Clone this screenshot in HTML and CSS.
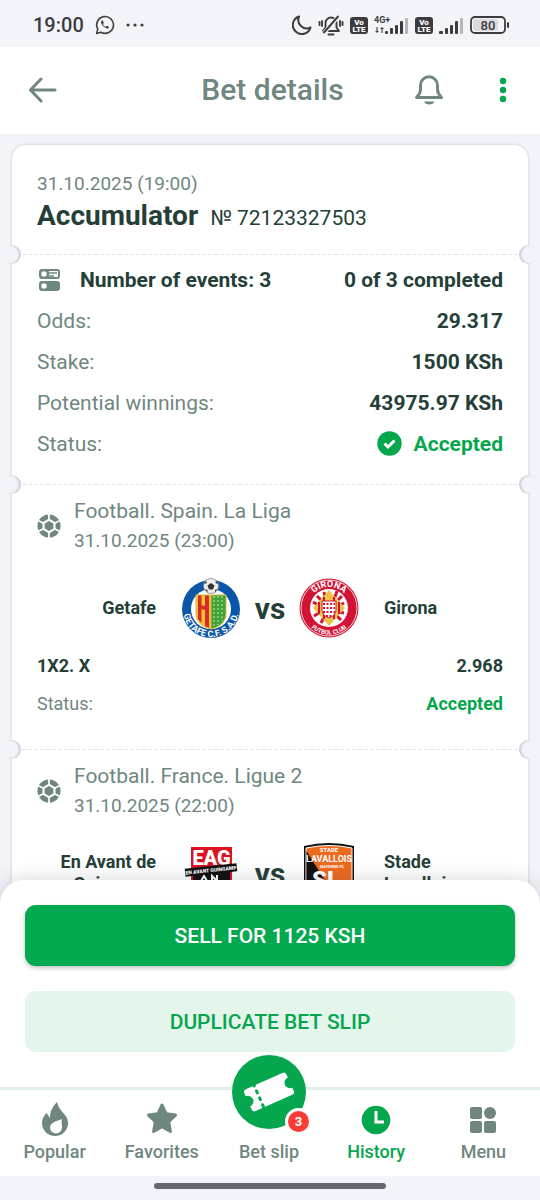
FILE: index.html
```html
<!DOCTYPE html>
<html lang="en">
<head>
    <meta charset="UTF-8">
    <meta name="viewport" content="width=device-width, initial-scale=1.0">
    <title>Bet details</title>
    <link rel="stylesheet" href="styles.css">
</head>
<body>
    <div class="status-bar">
        <div class="status-left">
            <span class="clock">19:00</span>
            <svg width="20" height="20" viewBox="0 0 20 20" fill="none" stroke="#3c3c40" stroke-width="1.6">
                <path d="M1.6 18.4l1.2-4.3a8.4 8.4 0 1 1 3.1 3.1z" stroke-linejoin="round"/>
                <path d="M6.9 5.4c-1.5 1-.8 3.5 1.3 5.7s4.700 3.200 5.700 1.500l-.1-.8-1.900-1-1.200 1.100c-1.200-.4-2.300-1.500-2.800-2.800l.9-1-.9-2.500z" fill="#3c3c40" stroke="none"/>
            </svg>
            <svg width="18" height="4" viewBox="0 0 18 4" fill="#3c3c40">
                <circle cx="2" cy="2" r="1.6"/><circle cx="9" cy="2" r="1.6"/><circle cx="16" cy="2" r="1.6"/>
            </svg>
        </div>
        <div class="status-right">
            <svg width="20" height="20" viewBox="0 0 20 20" fill="none" stroke="#3c3c40" stroke-width="2" stroke-linejoin="round">
                <path d="M7 1.500A9 9 0 1 0 18.500 12.500 8.500 8.500 0 0 1 7 1.500z"/>
            </svg>
            <svg width="26" height="22" viewBox="0 0 26 22" fill="none" stroke="#3c3c40" stroke-width="1.900" stroke-linecap="round" stroke-linejoin="round">
                <path d="M5 17h16l-2.500-3.500V9a5.500 5.500 0 0 0-11 0v4.500z"/>
                <path d="M6 19L20 3" stroke="#f3f4f9" stroke-width="4"/>
                <path d="M6 18.500L20 2.500M10.500 20.500h5M4 7v5M1.500 8v3M22 7v5M24.500 8v3"/>
            </svg>
            <svg width="18" height="17" viewBox="0 0 18 17">
                <rect width="18" height="17" rx="3" fill="#3c3c40"/>
                <text class="volte" x="9" y="8" text-anchor="middle">Vo</text>
                <text class="volte" x="9" y="15" text-anchor="middle">LTE</text>
            </svg>
            <svg width="35" height="20" viewBox="0 0 35 20" fill="#3c3c40">
                <text class="network" x="0" y="8">4G+</text>
                <path d="M2.500 12v4H1l2 2 2-2H3.600v-4zM7.500 18v-4H6l2-2 2 2H8.600v4z"/>
                <rect x="11" y="16" width="3" height="3" rx="1"/>
                <rect x="16" y="13" width="3" height="6" rx="1"/>
                <rect x="21" y="10" width="3" height="9" rx="1"/>
                <rect x="26" y="6" width="3" height="13" rx="1"/>
                <rect x="31" y="3" width="3" height="16" rx="1" fill="#b4b5ba"/>
            </svg>
            <svg width="18" height="17" viewBox="0 0 18 17">
                <rect width="18" height="17" rx="3" fill="#3c3c40"/>
                <text class="volte" x="9" y="8" text-anchor="middle">Vo</text>
                <text class="volte" x="9" y="15" text-anchor="middle">LTE</text>
            </svg>
            <svg width="25" height="20" viewBox="0 0 25 20" fill="#3c3c40">
                <rect x="0" y="16" width="4" height="3" rx="1"/>
                <rect x="6" y="13" width="3" height="6" rx="1"/>
                <rect x="11" y="10" width="3" height="9" rx="1"/>
                <rect x="16" y="6" width="3" height="13" rx="1"/>
                <rect x="21" y="3" width="3" height="16" rx="1" fill="#b4b5ba"/>
            </svg>
            <svg class="battery" width="40" height="18" viewBox="0 0 40 18">
                <rect x="3" y="3" width="25" height="12" rx="2" fill="#d9dade"/>
                <rect x="1" y="1" width="34" height="16" rx="4" fill="none" stroke="#3c3c40" stroke-width="1.800"/>
                <rect x="37" y="6" width="2" height="6" rx="1" fill="#3c3c40"/>
                <text class="charge" x="18" y="14" text-anchor="middle">80</text>
            </svg>
        </div>
    </div>

    <header class="header">
        <button class="icon-button" type="button" aria-label="Back">
            <svg width="30" height="26" viewBox="0 0 30 26" fill="none" stroke="#6f8780" stroke-width="3" stroke-linecap="round" stroke-linejoin="round">
                <path d="M13 2L2.500 13 13 24M2.500 13H27"/>
            </svg>
        </button>
        <h1>Bet details</h1>
        <button class="icon-button" type="button" aria-label="Notifications">
            <svg width="30" height="32" viewBox="0 0 30 32" fill="none" stroke="#6f8780" stroke-width="3" stroke-linejoin="round">
                <path d="M2.500 23.500h25c-2.500-2.500-4-5-4-8v-4.300a8.500 8.500 0 0 0-17 0v4.300c0 3-1.500 5.500-4 8z"/>
                <path d="M10 27.500h10.500c-1 2.300-2.700 3-5.200 3s-4.300-.7-5.300-3z" fill="#6f8780" stroke="none"/>
            </svg>
        </button>
        <button class="icon-button more" type="button" aria-label="More">
            <svg width="8" height="26" viewBox="0 0 8 26" fill="#06a64e">
                <circle cx="4" cy="4" r="3.200"/><circle cx="4" cy="13" r="3.200"/><circle cx="4" cy="22" r="3.200"/>
            </svg>
        </button>
    </header>

    <main class="content">
        <article class="ticket">
            <section class="summary">
                <p class="date">31.10.2025 (19:00)</p>
                <div class="ticket-title">
                    <h2>Accumulator</h2>
                    <span class="number">№ 72123327503</span>
                </div>
            </section>

            <section class="totals perforated">
                <div class="row">
                    <span class="events">
                        <svg width="24" height="22" viewBox="-2 0 24 22">
                            <rect x="1" y="1" width="19" height="8" rx="2" fill="none" stroke="#6f8780" stroke-width="2"/>
                            <rect x="1" y="1" width="9" height="8" rx="2" fill="#6f8780"/>
                            <path d="M10 4h8M10 7h5" stroke="#6f8780" stroke-width="1.400"/>
                            <rect x="0" y="12" width="21" height="10" rx="3" fill="#6f8780"/>
                            <circle cx="5" cy="5" r="2.700" fill="#fff"/>
                            <circle cx="5" cy="17" r="2.700" fill="#fff"/>
                        </svg>
                        Number of events: 3
                    </span>
                    <strong>0 of 3 completed</strong>
                </div>
                <div class="row"><span>Odds:</span><strong>29.317</strong></div>
                <div class="row"><span>Stake:</span><strong>1500 KSh</strong></div>
                <div class="row"><span>Potential winnings:</span><strong>43975.97 KSh</strong></div>
                <div class="row">
                    <span>Status:</span>
                    <strong class="accepted">
                        <svg width="25" height="25" viewBox="0 0 25 25">
                            <circle cx="12.500" cy="12.500" r="12.200" fill="#06a64e"/>
                            <path d="M7.500 12.500l3.500 3.500 6.500-6.500" fill="none" stroke="#fff" stroke-width="3"/>
                        </svg>
                        Accepted
                    </strong>
                </div>
            </section>

            <section class="match perforated">
                <div class="league">
                    <svg class="ball" width="24" height="24" viewBox="0 0 24 24">
                        <circle cx="12" cy="12" r="11.500" fill="#6f8780"/>
                        <g fill="#6f8780" stroke="#fff" stroke-width="1.700">
                            <path d="M12 0v24M1 6.500l22 11M1 17.500l22-11"/>
                            <path d="M12 4.500l6.500 4v7l-6.500 4-6.500-4v-7z" fill="#fff" stroke="none"/>
                            <path d="M12 6l5.200 3v6L12 18l-5.200-3V9z"/>
                        </g>
                    </svg>
                    <div>
                        <h3>Football. Spain. La Liga</h3>
                        <p class="date">31.10.2025 (23:00)</p>
                    </div>
                </div>
                <div class="teams">
                    <span class="team home">Getafe</span>
                    <svg width="60" height="60" viewBox="0 0 60 60">
                        <defs>
                            <path id="getafeArc" d="M3.500 22A28 28 0 1 0 56.500 22"/>
                        </defs>
                        <circle cx="30" cy="31" r="29" fill="#0b56a8"/>
                        <circle cx="30" cy="31" r="20" fill="#fff"/>
                        <path d="M15 17h15v34c-9-2-15-7-15-16z" fill="#f5c52c"/>
                        <path d="M17 17h3.500v28L17 41zM24 17h4v33l-4-2z" fill="#d62a2e"/>
                        <path d="M30 17h15v18c0 9-6 14-15 16z" fill="#43a436"/>
                        <path d="M33 18v31M37 18v29M41 18v25" stroke="#a8d69b" stroke-width="1.300" stroke-dasharray="2 2"/>
                        <path d="M19 26l3 2 4-1-1 4-3 1-2-2z" fill="#d62a2e"/>
                        <path d="M15 17h30v18c0 9-6 14-15 16-9-2-15-7-15-16zM30 17v34" fill="none" stroke="#d9b64a"/>
                        <text class="crest-text"><textPath href="#getafeArc" startOffset="50%" text-anchor="middle">GETAFE C.F. S.A.D.</textPath></text>
                        <circle cx="30" cy="8" r="7.500" fill="#eee" stroke="#888" stroke-width=".8"/>
                        <path d="M30 5l3.500 2.500L32 11.500h-4L26.500 7.500zM23 6l2-3 1 2zM35 2.500L37 6l-2.500-1zM24 11l2.500 1v2.500zM36.500 11L34 12v2.500z" fill="#333"/>
                    </svg>
                    <span class="versus">vs</span>
                    <svg width="60" height="60" viewBox="0 0 60 60">
                        <defs>
                            <path id="gironaTop" d="M9 30A21 21 0 0 1 51 30"/>
                            <path id="gironaBottom" d="M3.500 30A26.500 26.500 0 0 0 56.500 30"/>
                        </defs>
                        <circle cx="30" cy="30" r="29.500" fill="#d31335"/>
                        <circle cx="30" cy="30" r="28" fill="none" stroke="#fff" stroke-width=".8"/>
                        <circle cx="30" cy="30" r="19" fill="#fff"/>
                        <g stroke="#d31335" stroke-width="3">
                            <path d="M14 24l5 3M18 18l4 4M38 13l-2 6M43 18l-4 4M45 25l-4 2M45 35l-5-1M42 42l-5-5M22 45l3-6M15 38l5-3M25 14l1 5"/>
                        </g>
                        <path d="M30 12l16 18-16 18-16-18z" fill="#efc24a"/>
                        <path d="M25 19v22M35 19v22M20 24v12M40 24v12" stroke="#d31335" stroke-width="2"/>
                        <path d="M23 23h14v9c0 4-4 7-7 8-3-1-7-4-7-8z" fill="#fff" stroke="#d31335"/>
                        <path d="M24 26h12M24 30h12M24 34h12M27 38h6" stroke="#d31335" stroke-width="1.800" stroke-dasharray="2 1.500"/>
                        <text class="crest-text"><textPath href="#gironaTop" startOffset="50%" text-anchor="middle">GIRONA</textPath></text>
                        <text class="crest-text small"><textPath href="#gironaBottom" startOffset="50%" text-anchor="middle">FUTBOL CLUB</textPath></text>
                    </svg>
                    <span class="team">Girona</span>
                </div>
                <div class="bet-row market"><span>1X2. X</span><strong>2.968</strong></div>
                <div class="bet-row"><span>Status:</span><strong class="accepted">Accepted</strong></div>
            </section>

            <section class="match perforated">
                <div class="league">
                    <svg class="ball" width="24" height="24" viewBox="0 0 24 24">
                        <circle cx="12" cy="12" r="11.500" fill="#6f8780"/>
                        <g fill="#6f8780" stroke="#fff" stroke-width="1.700">
                            <path d="M12 0v24M1 6.500l22 11M1 17.500l22-11"/>
                            <path d="M12 4.500l6.500 4v7l-6.500 4-6.500-4v-7z" fill="#fff" stroke="none"/>
                            <path d="M12 6l5.200 3v6L12 18l-5.200-3V9z"/>
                        </g>
                    </svg>
                    <div>
                        <h3>Football. France. Ligue 2</h3>
                        <p class="date">31.10.2025 (22:00)</p>
                    </div>
                </div>
                <div class="teams">
                    <span class="team home">En Avant de Guingamp</span>
                    <svg width="60" height="60" viewBox="0 0 60 60">
                        <path d="M10 4h41v38L30 58 10 42z" fill="#dc1220"/>
                        <path d="M12 29h37v12L30 55 12 41z" fill="#111"/>
                        <path d="M20 38l3-5 3 5M31 38v-5l5 5v-6" stroke="#fff" stroke-width="2" fill="none"/>
                        <text class="eag" x="30.500" y="22" text-anchor="middle">EAG</text>
                        <g transform="rotate(-6 30 27)">
                            <rect x="4" y="23" width="52" height="8" fill="#111"/>
                            <text class="eag-band" x="30" y="29" text-anchor="middle">EN AVANT GUINGAMP</text>
                        </g>
                    </svg>
                    <span class="versus">vs</span>
                    <svg width="60" height="60" viewBox="0 0 60 60">
                        <path d="M5 3q25-6 50 0v34q0 14-25 21Q5 51 5 37z" fill="#111"/>
                        <path d="M7 5q23-5 46 0v32q0 12-23 19Q7 49 7 37z" fill="#ee6a1f" stroke="#fff"/>
                        <path d="M7.500 8L35 52l-5 3Q7.500 48 7.500 37z" fill="#111"/>
                        <text class="stade" x="30" y="9" text-anchor="middle">STADE</text>
                        <text class="lavallois" x="30" y="19" text-anchor="middle">LAVALLOIS</text>
                        <text class="stade mayenne" x="33" y="25" text-anchor="middle">MAYENNE FC</text>
                        <text class="sl" x="27" y="45" text-anchor="middle">SL</text>
                    </svg>
                    <span class="team">Stade Lavallois</span>
                </div>
            </section>
        </article>
    </main>

    <div class="actions">
        <button class="sell" type="button">SELL FOR 1125 KSH</button>
        <button class="duplicate" type="button">DUPLICATE BET SLIP</button>
    </div>

    <nav class="tabs">
        <a href="#popular" class="tab">
            <svg width="34" height="36" viewBox="0 0 34 36">
                <path d="M19 1C14 6 12 11 12 17L8.500 12C5.500 15 4 18 4 22a13 13 0 0 0 26 0c0-9-9-11-11-21z" fill="#6f8780"/>
                <path d="M24 18c-4 2-12 3-12 8.500a6 6 0 0 0 12 0c0-3-1-5 0-8.500z" fill="#fff"/>
            </svg>
            Popular
        </a>
        <a href="#favorites" class="tab">
            <svg width="34" height="36" viewBox="0 0 34 36">
                <path d="M17 4l4.200 8.800 9.300 1.300-6.800 6.700 1.700 9.700L17 25.800l-8.400 4.700 1.700-9.700-6.800-6.700 9.300-1.300z" fill="#6f8780" stroke="#6f8780" stroke-width="3" stroke-linejoin="round"/>
            </svg>
            Favorites
        </a>
        <a href="#slip" class="tab">
            <span class="slip-button">
                <svg width="54" height="46" viewBox="0 0 54 46">
                    <g transform="rotate(-24 27 23)">
                        <path d="M7 11h40a3 3 0 0 1 3 3v3.500a5.500 5.500 0 0 0 0 11V32a3 3 0 0 1-3 3H7a3 3 0 0 1-3-3v-3.500a5.500 5.500 0 0 0 0-11V14a3 3 0 0 1 3-3z" fill="#fff"/>
                        <path d="M16 9.500v27" stroke="#06a64e" stroke-width="3" stroke-linecap="round" stroke-dasharray="2 5.500"/>
                    </g>
                </svg>
                <span class="badge">3</span>
            </span>
            Bet slip
        </a>
        <a href="#history" class="tab active">
            <svg width="34" height="36" viewBox="0 0 34 36">
                <circle cx="17" cy="19" r="14.300" fill="#06a64e"/>
                <path d="M17 10v11h8" fill="none" stroke="#fff" stroke-width="3"/>
            </svg>
            History
        </a>
        <a href="#menu" class="tab">
            <svg width="34" height="36" viewBox="0 0 34 36" fill="#6f8780">
                <rect x="4" y="6" width="12" height="12" rx="2"/>
                <circle cx="24" cy="12" r="6"/>
                <rect x="4" y="20" width="12" height="12" rx="2"/>
                <rect x="18" y="20" width="12" height="12" rx="2"/>
            </svg>
            Menu
        </a>
    </nav>
    <div class="gesture-bar"><span></span></div>
</body>
</html>
```
FILE: styles.css
```css
* {
    box-sizing: border-box;
}

body {
    margin: 0;
    height: 100vh;
    display: flex;
    flex-direction: column;
    overflow: hidden;
    background-color: #f3f4f9;
    color: #253f38;
    font-family: Roboto, sans-serif;
}

h1, h2, h3, p {
    margin: 0;
}

svg {
    display: block;
    flex-shrink: 0;
}

button {
    border: none;
    font-family: inherit;
    cursor: pointer;
}

.status-bar {
    height: 47px;
    padding: 3px 30px 0 33px;
    display: flex;
    flex-shrink: 0;
    align-items: center;
    justify-content: space-between;
}

.status-left {
    display: flex;
    align-items: center;
    gap: 11px;
}

.status-right {
    display: flex;
    align-items: center;
    gap: 6px;
}

.clock {
    font-size: 20px;
    font-weight: 500;
    color: #3c3c40;
}

.volte {
    font-size: 8px;
    font-weight: 900;
    fill: #fff;
}

.network {
    font-size: 9px;
    font-weight: 700;
}

.charge {
    font-size: 13px;
    font-weight: 500;
    fill: #3c3c40;
}

.header {
    height: 87px;
    padding: 0 33px 2px 28px;
    display: flex;
    flex-shrink: 0;
    align-items: center;
    background-color: #fff;
}

.header h1 {
    flex: 1;
    padding-left: 73px;
    text-align: center;
    font-size: 30px;
    font-weight: 500;
    color: #6f8780;
}

.icon-button {
    padding: 0;
    background: none;
}

.more {
    margin-left: 55px;
}

.content {
    flex: 1;
    min-height: 0;
    overflow: hidden;
    padding: 11px 12px 0;
}

.ticket {
    background-color: #fff;
    border-radius: 14px;
    box-shadow: 0 0 3px rgba(40, 50, 70, 0.25);
}

.summary {
    padding: 26px 25px 20px;
}

.date {
    font-size: 19px;
    line-height: 26px;
    color: #6f8780;
}

.ticket-title {
    display: flex;
    align-items: baseline;
    gap: 12px;
    margin-top: 3px;
    line-height: 32px;
}

.ticket-title h2 {
    font-size: 28px;
    font-weight: 700;
}

.number {
    font-size: 21px;
}

/* dotted tear line with a notch at each end */
.perforated {
    position: relative;
    background: repeating-linear-gradient(90deg, #e3e6e8 0 4px, transparent 4px 6px) 10px 0 / calc(100% - 20px) 1px no-repeat;
}

.perforated::before,
.perforated::after {
    content: "";
    position: absolute;
    top: -9px;
    left: -10px;
    width: 19px;
    height: 19px;
    border-radius: 50%;
    background-color: #f3f4f9;
    box-shadow: inset -2px 0 2px rgba(40, 50, 70, 0.2);
}

.perforated::after {
    left: auto;
    right: -10px;
    box-shadow: inset 2px 0 2px rgba(40, 50, 70, 0.2);
}

.totals {
    padding: 5px 25px 20px;
}

.row {
    display: flex;
    align-items: center;
    justify-content: space-between;
    height: 41px;
    font-size: 21px;
    color: #6f8780;
}

.row strong {
    font-weight: 700;
    color: #253f38;
}

.events {
    display: flex;
    align-items: center;
    gap: 19px;
    font-weight: 700;
    color: #253f38;
}

.row .accepted,
.bet-row .accepted {
    display: flex;
    align-items: center;
    gap: 12px;
    color: #06a64e;
}

.match {
    padding: 12px 25px 27px;
}

.league {
    display: flex;
    align-items: center;
    gap: 13px;
}

.league h3 {
    font-size: 21px;
    font-weight: 400;
    line-height: 30px;
    color: #6f8780;
}

.league .date {
    line-height: 30px;
}

.teams {
    display: grid;
    grid-template-columns: 1fr 60px 58px 60px 1fr;
    align-items: center;
    margin: 22px 0 8px;
}

.team {
    padding-left: 25px;
    font-size: 18px;
    font-weight: 700;
    line-height: 22px;
}

.home {
    padding: 0 25px 0 0;
    text-align: right;
}

.versus {
    text-align: center;
    font-size: 30px;
    font-weight: 700;
}

.bet-row {
    display: flex;
    align-items: center;
    justify-content: space-between;
    height: 38px;
    font-size: 18px;
    color: #6f8780;
}

.bet-row strong,
.market {
    font-weight: 700;
    color: #253f38;
}

.crest-text {
    font-size: 9px;
    font-weight: 700;
    fill: #fff;
}

.small {
    font-size: 6px;
}

.eag {
    font-size: 20px;
    font-weight: 900;
    fill: #fff;
}

.eag-band {
    font-size: 5px;
    font-weight: 900;
    fill: #fff;
}

.stade {
    font-size: 6px;
    font-weight: 700;
    fill: #fff;
}

.mayenne {
    font-size: 4px;
}

.lavallois {
    font-size: 9px;
    font-weight: 700;
    fill: #fff;
}

.sl {
    font-size: 24px;
    font-weight: 900;
    fill: #fff;
}

.actions {
    position: relative;
    display: flex;
    flex-direction: column;
    gap: 25px;
    flex-shrink: 0;
    padding: 25px 25px 35px;
    background-color: #fff;
    border-radius: 24px 24px 0 0;
    margin-top: -24px;
    box-shadow: 0 0 20px rgba(40, 50, 70, 0.2);
}

.actions button {
    height: 61px;
    border-radius: 11px;
    font-size: 21px;
    font-weight: 500;
}

.sell {
    background-color: #02a94e;
    color: #fff;
    box-shadow: 0 2px 4px rgba(0, 0, 0, 0.25);
}

.duplicate {
    background-color: #e4f5eb;
    color: #06a64e;
}

.tabs {
    position: relative;
    display: grid;
    grid-template-columns: repeat(5, 1fr);
    grid-template-rows: 86px;
    flex-shrink: 0;
    height: 89px;
    padding: 0 3px 0 1px;
    border-top: 3px solid #e2eeea;
    background-color: #fff;
}

.tab {
    display: flex;
    flex-direction: column;
    align-items: center;
    justify-content: flex-end;
    gap: 3px;
    padding-bottom: 12px;
    font-size: 18px;
    font-weight: 500;
    line-height: 24px;
    color: #6f8780;
    text-decoration: none;
}

.active {
    color: #06a64e;
}

.slip-button {
    position: relative;
    display: flex;
    align-items: center;
    justify-content: center;
    flex-shrink: 0;
    width: 74px;
    height: 74px;
    margin-bottom: 8px;
    border-radius: 50%;
    background-color: #06a64e;
}

.badge {
    position: absolute;
    right: -6px;
    bottom: -6px;
    width: 27px;
    height: 27px;
    border: 3px solid #fff;
    border-radius: 50%;
    background-color: #fb3b35;
    color: #fff;
    font-size: 13px;
    font-weight: 700;
    line-height: 21px;
    text-align: center;
}

.gesture-bar {
    height: 24px;
    flex-shrink: 0;
    display: flex;
    justify-content: center;
    padding-top: 7px;
}

.gesture-bar span {
    width: 43%;
    height: 6px;
    border-radius: 3px;
    background-color: #67686d;
}
```
